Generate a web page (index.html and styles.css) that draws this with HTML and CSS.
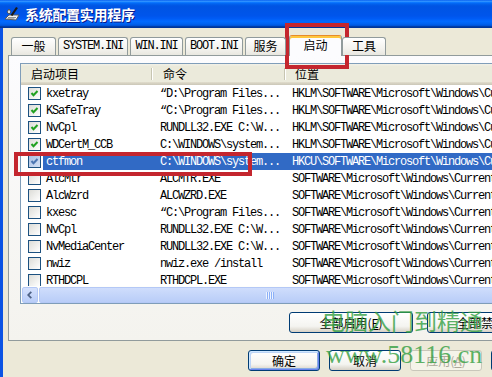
FILE: index.html
```html
<!DOCTYPE html>
<html lang="zh-CN">

<head>
    <meta charset="UTF-8">
    <meta name="viewport" content="width=device-width, initial-scale=1.0">
    <title>系统配置实用程序</title>
    <link rel="stylesheet" href="styles.css">
</head>

<body>

    <div class="window">
        <div class="titlebar">
            <svg class="app-icon" viewBox="0 0 16 16">
                <path d="M1 13 L5 9 L15 9 L12 14 Z" fill="#f4f4f4" stroke="#5a5a5a" stroke-width="1"/>
                <path d="M4 11.5 H12 M3.5 12.8 H10.5" stroke="#7a7a7a" stroke-width="0.8"/>
                <path d="M13 1.5 L7.5 9.5" stroke="#1a1a1a" stroke-width="2.2"/>
                <path d="M3 6 L5 3 L7 6 L5 8 Z" fill="#dcdcdc" stroke="#444" stroke-width="0.8"/>
            </svg>
            <span class="title">系统配置实用程序</span>
        </div>

        <div class="frame">
            <ul class="tabs">
                <li class="tab tab-general">一般</li>
                <li class="tab tab-system mono">SYSTEM.INI</li>
                <li class="tab tab-win mono">WIN.INI</li>
                <li class="tab tab-boot mono">BOOT.INI</li>
                <li class="tab tab-services">服务</li>
                <li class="tab tab-startup active">启动</li>
                <li class="tab tab-tools">工具</li>
            </ul>

            <div class="panel">
                <div class="listview">
                    <div class="list-head">
                        <div class="head-cell">启动项目</div>
                        <div class="head-cell">命令</div>
                        <div class="head-cell">位置</div>
                    </div>

                    <div class="list-body mono">
                        <div class="row">
                            <div class="cell name-cell"><span class="check on"><svg viewBox="0 0 11 11"><polyline points="2.5,5 4.5,7.3 8.5,3"/></svg></span><span class="label">kxetray</span></div>
                            <div class="cell">“D:\Program Files...</div>
                            <div class="cell loc">HKLM\SOFTWARE\Microsoft\Windows\CurrentVersion\Run</div>
                        </div>
                        <div class="row">
                            <div class="cell name-cell"><span class="check on"><svg viewBox="0 0 11 11"><polyline points="2.5,5 4.5,7.3 8.5,3"/></svg></span><span class="label">KSafeTray</span></div>
                            <div class="cell">“C:\Program Files...</div>
                            <div class="cell loc">HKLM\SOFTWARE\Microsoft\Windows\CurrentVersion\Run</div>
                        </div>
                        <div class="row">
                            <div class="cell name-cell"><span class="check on"><svg viewBox="0 0 11 11"><polyline points="2.5,5 4.5,7.3 8.5,3"/></svg></span><span class="label">NvCpl</span></div>
                            <div class="cell">RUNDLL32.EXE C:\W...</div>
                            <div class="cell loc">HKLM\SOFTWARE\Microsoft\Windows\CurrentVersion\Run</div>
                        </div>
                        <div class="row">
                            <div class="cell name-cell"><span class="check on"><svg viewBox="0 0 11 11"><polyline points="2.5,5 4.5,7.3 8.5,3"/></svg></span><span class="label">WDCertM_CCB</span></div>
                            <div class="cell">C:\WINDOWS\system...</div>
                            <div class="cell loc">HKLM\SOFTWARE\Microsoft\Windows\CurrentVersion\Run</div>
                        </div>
                        <div class="row selected">
                            <div class="cell name-cell"><span class="check on"><svg viewBox="0 0 11 11"><polyline points="2.5,5 4.5,7.3 8.5,3"/></svg></span><span class="label">ctfmon</span></div>
                            <div class="cell">C:\WINDOWS\system...</div>
                            <div class="cell loc">HKCU\SOFTWARE\Microsoft\Windows\CurrentVersion\Run</div>
                        </div>
                        <div class="row">
                            <div class="cell name-cell"><span class="check"></span><span class="label">AlcMtr</span></div>
                            <div class="cell">ALCMTR.EXE</div>
                            <div class="cell loc">SOFTWARE\Microsoft\Windows\CurrentVersion\Run</div>
                        </div>
                        <div class="row">
                            <div class="cell name-cell"><span class="check"></span><span class="label">AlcWzrd</span></div>
                            <div class="cell">ALCWZRD.EXE</div>
                            <div class="cell loc">SOFTWARE\Microsoft\Windows\CurrentVersion\Run</div>
                        </div>
                        <div class="row">
                            <div class="cell name-cell"><span class="check"></span><span class="label">kxesc</span></div>
                            <div class="cell">“C:\Program Files...</div>
                            <div class="cell loc">SOFTWARE\Microsoft\Windows\CurrentVersion\Run</div>
                        </div>
                        <div class="row">
                            <div class="cell name-cell"><span class="check"></span><span class="label">NvCpl</span></div>
                            <div class="cell">RUNDLL32.EXE C:\W...</div>
                            <div class="cell loc">SOFTWARE\Microsoft\Windows\CurrentVersion\Run</div>
                        </div>
                        <div class="row">
                            <div class="cell name-cell"><span class="check"></span><span class="label">NvMediaCenter</span></div>
                            <div class="cell">RUNDLL32.EXE C:\W...</div>
                            <div class="cell loc">SOFTWARE\Microsoft\Windows\CurrentVersion\Run</div>
                        </div>
                        <div class="row">
                            <div class="cell name-cell"><span class="check"></span><span class="label">nwiz</span></div>
                            <div class="cell">nwiz.exe /install</div>
                            <div class="cell loc">SOFTWARE\Microsoft\Windows\CurrentVersion\Run</div>
                        </div>
                        <div class="row">
                            <div class="cell name-cell"><span class="check"></span><span class="label">RTHDCPL</span></div>
                            <div class="cell">RTHDCPL.EXE</div>
                            <div class="cell loc">SOFTWARE\Microsoft\Windows\CurrentVersion\Run</div>
                        </div>
                    </div>

                    <div class="hscroll">
                        <span class="scroll-btn"><svg viewBox="0 0 16 16"><polyline points="9.5,4.5 6,8 9.5,11.5"/></svg></span>
                        <span class="scroll-thumb"><span class="grip"></span></span>
                    </div>
                </div>

                <div class="panel-actions">
                    <button class="btn btn-wide">全部启用(<u>E</u>)</button>
                    <button class="btn btn-wide">全部禁用(<u>B</u>)</button>
                </div>
            </div>

            <div class="actions">
                <button class="btn default">确定</button>
                <button class="btn">取消</button>
                <button class="btn" disabled>应用(<u>A</u>)</button>
                <button class="btn">帮助</button>
            </div>
        </div>

        <!-- red annotation frames -->
        <div class="mark mark-tab"></div>
        <div class="mark mark-row"></div>

        <!-- site watermark -->
        <div class="watermark">
            <div class="wm-title">电脑入门到精通</div>
            <div class="wm-url">www.58116.cn</div>
        </div>
    </div>

</body>

</html>
```

FILE: styles.css
```css
/* XP style msconfig window */
* {
    box-sizing: border-box;
}

body {
    margin: 0;
    width: 492px;
    height: 377px;
    overflow: hidden;
    background-color: #ECE9D8;
    font-family: "Noto Sans CJK SC", sans-serif;
    font-size: 12px;
    color: #000;
}

.mono {
    font-family: "Liberation Mono", "Noto Sans CJK SC", monospace;
    letter-spacing: -1.2px;
}

.window {
    position: relative;
    width: 572px;
    height: 377px;
}

/* title bar */
.titlebar {
    display: flex;
    align-items: center;
    height: 28px;
    padding-left: 4px;
    background: linear-gradient(to bottom, #0058EE 0%, #3593FF 4%, #288EFF 6%, #127DFF 8%, #036FFC 10%, #0262EE 14%, #0057E5 20%, #0054E3 24%, #0055EB 56%, #005BF5 66%, #026AFE 76%, #0062EF 86%, #0052D6 92%, #0040AB 94%, #003092 100%);
}

.app-icon {
    width: 16px;
    height: 16px;
    margin-right: 5px;
}

.title {
    color: #fff;
    font-size: 14px;
    font-weight: bold;
    line-height: 28px;
    letter-spacing: -0.3px;
    text-shadow: 1px 1px #0A1A8A;
}

.frame {
    height: 349px;
    padding: 7px 5px 0;
    border-left: 3px solid #0B53E4;
    border-right: 3px solid #0B53E4;
}

/* tabs */
.tabs {
    display: flex;
    align-items: flex-end;
    gap: 2px;
    height: 20px;
    margin: 0;
    padding: 0 0 0 3px;
    list-style: none;
    position: relative;
    z-index: 1;
}

.tab {
    height: 18px;
    line-height: 16px;
    text-align: center;
    border: 1px solid #919B9C;
    border-bottom: none;
    border-radius: 3px 3px 0 0;
    background: linear-gradient(#FFFFFF, #F4F3EF 60%, #E8E7E0);
}

.tab.active {
    height: 21px;
    margin: 0 -2px -1px 1px;
    line-height: 17px;
    border-top: 1px solid #E68B2C;
    box-shadow: inset 0 2px #FFC73C;
    background: #FCFCFE;
}

.tab-general { width: 45px; }
.tab-system { width: 70px; }
.tab-win { width: 53px; }
.tab-boot { width: 58px; }
.tab-services { width: 41px; }
.tab-startup { width: 53px; }
.tab-tools { width: 44px; }

/* tab page */
.panel {
    height: 286px;
    padding: 7px 12px 0 11px;
    border: 1px solid #919B9C;
    background: linear-gradient(#FCFCFE, #F4F3EE);
}

.listview {
    display: flex;
    flex-direction: column;
    height: 241px;
    border: 1px solid #7F9DB9;
    background-color: #fff;
    overflow: hidden;
}

.list-head,
.row {
    display: grid;
    grid-template-columns: 131px 133px 1fr;
}

.list-head {
    flex: none;
    height: 21px;
    background: linear-gradient(to bottom, #F2F1E8 0, #EBEADB 12%, #EBEADB 84%, #E2DECD 86%, #D6D2C2 92%, #CBC7B8 100%);
}

.head-cell {
    position: relative;
    padding-left: 10px;
    line-height: 20px;
    white-space: nowrap;
}

.head-cell:nth-child(2) {
    padding-left: 11px;
}

.head-cell:not(:last-child)::after {
    content: "";
    position: absolute;
    right: 0;
    top: 4px;
    bottom: 5px;
    width: 1px;
    background-color: #C7C5B2;
    box-shadow: 1px 0 #fff;
}

.list-body {
    flex: 1;
    overflow: hidden;
}

.row {
    height: 17px;
    line-height: 18px;
    white-space: nowrap;
}

.cell {
    padding-left: 8px;
    overflow: hidden;
}

.cell.loc {
    padding-left: 7px;
}

.name-cell {
    display: flex;
    align-items: center;
    padding-left: 7px;
}

.label {
    flex: 1;
    margin-left: 2px;
    padding-left: 3px;
}

.row.selected .label,
.row.selected .cell:not(.name-cell) {
    background-color: #316AC5;
    color: #fff;
}

.check {
    flex: none;
    width: 13px;
    height: 13px;
    border: 1px solid #1C5180;
    background: linear-gradient(135deg, #DCDCD7, #FFFFFF);
}

.check svg {
    display: block;
    width: 11px;
    height: 11px;
    fill: none;
    stroke: #21A121;
    stroke-width: 2;
}

.row.selected .check {
    background: linear-gradient(135deg, #A9C0E4, #D4E0F3);
}

.row.selected .check svg {
    stroke: #4C76B2;
}

/* horizontal scrollbar */
.hscroll {
    flex: none;
    display: flex;
    gap: 1px;
    height: 17px;
    padding: 1px 0 0 1px;
    background-color: #FEFEFB;
}

.scroll-btn {
    width: 16px;
    height: 16px;
    border: 1px solid #B4C8F6;
    border-radius: 2px;
    background: linear-gradient(#D5E1FD, #B9CDF8);
}

.scroll-btn svg {
    display: block;
    width: 14px;
    height: 14px;
    fill: none;
    stroke: #4D6185;
    stroke-width: 2;
}

.scroll-thumb {
    display: flex;
    align-items: center;
    justify-content: center;
    width: 462px;
    height: 16px;
    border: 1px solid #B4C8F6;
    border-radius: 2px;
    background: linear-gradient(#CFDDFC, #B9CDF8);
}

.grip {
    width: 8px;
    height: 7px;
    background: repeating-linear-gradient(to right, #EEF4FE 0 1px, #8CB0F8 1px 2px);
}

/* buttons */
.panel-actions {
    display: flex;
    justify-content: flex-end;
    gap: 14px;
    margin-top: 8px;
}

.actions {
    display: flex;
    justify-content: flex-end;
    gap: 9px;
    margin-top: 9px;
    padding-right: 1px;
}

.btn {
    width: 72px;
    height: 21px;
    padding: 0;
    font-family: "Noto Sans CJK SC", sans-serif;
    font-size: 12px;
    line-height: 19px;
    color: #000;
    border: 1px solid #003C74;
    border-radius: 3px;
    background: linear-gradient(#FFFFFF, #F4F4F0 70%, #D6D0C5);
}

.btn-wide {
    width: 124px;
}

.btn.default {
    box-shadow: inset 1px 1px #CEE7FF, inset -1px -1px #6982EE, inset 2px 2px #BCD4F6, inset -2px -2px #89ADE4;
}

.btn:disabled {
    color: #ACA899;
    border-color: #C9C7BA;
    background: #F5F4EA;
}

/* annotations drawn over the screenshot */
.mark {
    position: absolute;
    border: 4px solid #C4262E;
}

.mark-tab {
    left: 285px;
    top: 23px;
    width: 64px;
    height: 46px;
}

.mark-row {
    left: 14px;
    top: 152px;
    width: 238px;
    height: 24px;
}

.watermark {
    position: absolute;
    left: 322px;
    top: 304px;
    color: #35A043;
    opacity: 0.8;
    pointer-events: none;
}

.wm-title {
    font-size: 23px;
    line-height: 32px;
}

.wm-url {
    margin-left: 4px;
    font-family: "Liberation Serif", serif;
    font-size: 26px;
    line-height: 38px;
}
```
